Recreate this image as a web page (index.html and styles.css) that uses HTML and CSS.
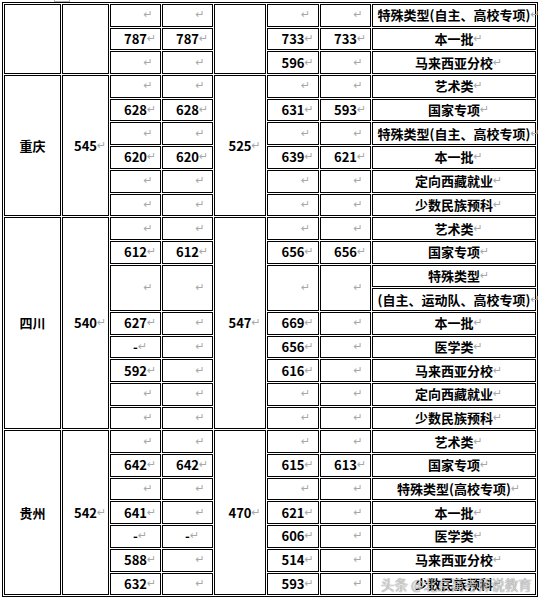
FILE: index.html
```html
<!DOCTYPE html>
<html lang="zh">
<head>
<meta charset="utf-8">
<title>分数线</title>
<link rel="stylesheet" href="styles.css">
</head>
<body>
<div class="page">
  <div class="handle"></div>
  <table class="grid">
    <colgroup>
      <col class="w1"><col class="w2"><col class="w3"><col class="w4"><col class="w5"><col class="w6"><col class="w7"><col class="w8">
    </colgroup>
    <tbody>
      <!-- group 0 -->
      <tr>
        <td rowspan="3"></td><td rowspan="3"></td>
        <td class="e"><span class="m">↵</span></td><td class="e"><span class="m">↵</span></td>
        <td rowspan="3"></td>
        <td class="e"><span class="m">↵</span></td><td class="e"><span class="m">↵</span></td>
        <td>特殊类型(自主、高校专项)<span class="m">↵</span></td>
      </tr>
      <tr>
        <td>787<span class="m">↵</span></td><td>787<span class="m">↵</span></td>
        <td>733<span class="m">↵</span></td><td>733<span class="m">↵</span></td>
        <td>本一批<span class="m">↵</span></td>
      </tr>
      <tr>
        <td class="e"><span class="m">↵</span></td><td class="e"><span class="m">↵</span></td>
        <td>596<span class="m">↵</span></td><td class="e"><span class="m">↵</span></td>
        <td>马来西亚分校<span class="m">↵</span></td>
      </tr>
      <!-- 重庆 -->
      <tr>
        <td rowspan="6">重庆</td><td rowspan="6">545<span class="m">↵</span></td>
        <td class="e"><span class="m">↵</span></td><td class="e"><span class="m">↵</span></td>
        <td rowspan="6">525<span class="m">↵</span></td>
        <td class="e"><span class="m">↵</span></td><td class="e"><span class="m">↵</span></td>
        <td>艺术类<span class="m">↵</span></td>
      </tr>
      <tr>
        <td>628<span class="m">↵</span></td><td>628<span class="m">↵</span></td>
        <td>631<span class="m">↵</span></td><td>593<span class="m">↵</span></td>
        <td>国家专项<span class="m">↵</span></td>
      </tr>
      <tr>
        <td class="e"><span class="m">↵</span></td><td class="e"><span class="m">↵</span></td>
        <td class="e"><span class="m">↵</span></td><td class="e"><span class="m">↵</span></td>
        <td>特殊类型(自主、高校专项)<span class="m">↵</span></td>
      </tr>
      <tr>
        <td>620<span class="m">↵</span></td><td>620<span class="m">↵</span></td>
        <td>639<span class="m">↵</span></td><td>621<span class="m">↵</span></td>
        <td>本一批<span class="m">↵</span></td>
      </tr>
      <tr>
        <td class="e"><span class="m">↵</span></td><td class="e"><span class="m">↵</span></td>
        <td class="e"><span class="m">↵</span></td><td class="e"><span class="m">↵</span></td>
        <td>定向西藏就业<span class="m">↵</span></td>
      </tr>
      <tr>
        <td class="e"><span class="m">↵</span></td><td class="e"><span class="m">↵</span></td>
        <td class="e"><span class="m">↵</span></td><td class="e"><span class="m">↵</span></td>
        <td>少数民族预科<span class="m">↵</span></td>
      </tr>
      <!-- 四川 -->
      <tr>
        <td rowspan="9">四川</td><td rowspan="9">540<span class="m">↵</span></td>
        <td class="e"><span class="m">↵</span></td><td class="e"><span class="m">↵</span></td>
        <td rowspan="9">547<span class="m">↵</span></td>
        <td class="e"><span class="m">↵</span></td><td class="e"><span class="m">↵</span></td>
        <td>艺术类<span class="m">↵</span></td>
      </tr>
      <tr>
        <td>612<span class="m">↵</span></td><td>612<span class="m">↵</span></td>
        <td>656<span class="m">↵</span></td><td>656<span class="m">↵</span></td>
        <td>国家专项<span class="m">↵</span></td>
      </tr>
      <tr>
        <td rowspan="2" class="e"><span class="m">↵</span></td><td rowspan="2" class="e"><span class="m">↵</span></td>
        <td rowspan="2" class="e"><span class="m">↵</span></td><td rowspan="2" class="e"><span class="m">↵</span></td>
        <td>特殊类型<span class="m">↵</span></td>
      </tr>
      <tr>
        <td>(自主、运动队、高校专项)<span class="m">↵</span></td>
      </tr>
      <tr>
        <td>627<span class="m">↵</span></td><td class="e"><span class="m">↵</span></td>
        <td>669<span class="m">↵</span></td><td class="e"><span class="m">↵</span></td>
        <td>本一批<span class="m">↵</span></td>
      </tr>
      <tr>
        <td>-<span class="m">↵</span></td><td class="e"><span class="m">↵</span></td>
        <td>656<span class="m">↵</span></td><td class="e"><span class="m">↵</span></td>
        <td>医学类<span class="m">↵</span></td>
      </tr>
      <tr>
        <td>592<span class="m">↵</span></td><td class="e"><span class="m">↵</span></td>
        <td>616<span class="m">↵</span></td><td class="e"><span class="m">↵</span></td>
        <td>马来西亚分校<span class="m">↵</span></td>
      </tr>
      <tr>
        <td class="e"><span class="m">↵</span></td><td class="e"><span class="m">↵</span></td>
        <td class="e"><span class="m">↵</span></td><td class="e"><span class="m">↵</span></td>
        <td>定向西藏就业<span class="m">↵</span></td>
      </tr>
      <tr>
        <td class="e"><span class="m">↵</span></td><td class="e"><span class="m">↵</span></td>
        <td class="e"><span class="m">↵</span></td><td class="e"><span class="m">↵</span></td>
        <td>少数民族预科<span class="m">↵</span></td>
      </tr>
      <!-- 贵州 -->
      <tr>
        <td rowspan="7">贵州</td><td rowspan="7">542<span class="m">↵</span></td>
        <td class="e"><span class="m">↵</span></td><td class="e"><span class="m">↵</span></td>
        <td rowspan="7">470<span class="m">↵</span></td>
        <td class="e"><span class="m">↵</span></td><td class="e"><span class="m">↵</span></td>
        <td>艺术类<span class="m">↵</span></td>
      </tr>
      <tr>
        <td>642<span class="m">↵</span></td><td>642<span class="m">↵</span></td>
        <td>615<span class="m">↵</span></td><td>613<span class="m">↵</span></td>
        <td>国家专项<span class="m">↵</span></td>
      </tr>
      <tr>
        <td class="e"><span class="m">↵</span></td><td class="e"><span class="m">↵</span></td>
        <td class="e"><span class="m">↵</span></td><td class="e"><span class="m">↵</span></td>
        <td>特殊类型(高校专项)<span class="m">↵</span></td>
      </tr>
      <tr>
        <td>641<span class="m">↵</span></td><td class="e"><span class="m">↵</span></td>
        <td>621<span class="m">↵</span></td><td class="e"><span class="m">↵</span></td>
        <td>本一批<span class="m">↵</span></td>
      </tr>
      <tr>
        <td>-<span class="m">↵</span></td><td>-<span class="m">↵</span></td>
        <td>606<span class="m">↵</span></td><td class="e"><span class="m">↵</span></td>
        <td>医学类<span class="m">↵</span></td>
      </tr>
      <tr>
        <td>588<span class="m">↵</span></td><td class="e"><span class="m">↵</span></td>
        <td>514<span class="m">↵</span></td><td class="e"><span class="m">↵</span></td>
        <td>马来西亚分校<span class="m">↵</span></td>
      </tr>
      <tr>
        <td>632<span class="m">↵</span></td><td class="e"><span class="m">↵</span></td>
        <td>593<span class="m">↵</span></td><td class="e"><span class="m">↵</span></td>
        <td>少数民族预科<span class="m">↵</span></td>
      </tr>
    </tbody>
  </table>
  <div class="watermark">头条 @北京高考师说教育</div>
</div>
</body>
</html>
```

FILE: styles.css
```css
html, body {
  margin: 0;
  padding: 0;
  background: #ffffff;
}

.page {
  position: relative;
  padding: 2px 2px 0 2px;
  width: 536px;
}

.handle {
  position: absolute;
  left: 54px;
  top: -12px;
  width: 14px;
  height: 12px;
  border: 1px solid #b0b0b0;
  background: #ffffff;
}

.grid {
  table-layout: fixed;
  width: 536px;
  border-collapse: separate;
  border-spacing: 1px;
  border: 1px solid #000000;
  font-family: "Noto Sans CJK SC", "Noto Sans", sans-serif;
  font-weight: 700;
  font-size: 13px;
  color: #000000;
}

.w1 { width: 57px; }
.w2 { width: 47px; }
.w3 { width: 51px; }
.w4 { width: 51px; }
.w5 { width: 52px; }
.w6 { width: 52px; }
.w7 { width: 51px; }
.w8 { width: 164px; }

.grid tr {
  height: 22.7px;
}

.grid td {
  box-sizing: border-box;
  border: 1px solid #000000;
  padding: 0;
  text-align: center;
  vertical-align: middle;
  line-height: 16px;
  white-space: nowrap;
  overflow: visible;
}

.m {
  display: inline-block;
  width: 9px;
  margin-right: -9px;
  font-family: "DejaVu Sans", sans-serif;
  font-weight: 400;
  font-size: 11px;
  line-height: 16px;
  color: #a8a8a8;
  text-align: left;
  vertical-align: top;
}

.e .m {
  margin-left: 16px;
}

.watermark {
  position: absolute;
  left: 381px;
  top: 575px;
  font-family: "Noto Sans CJK SC", sans-serif;
  font-size: 13.5px;
  font-weight: 400;
  line-height: 18px;
  color: rgba(255, 255, 255, 0.7);
  text-shadow: 0 0 1px rgba(0, 0, 0, 0.5), 0 0 1px rgba(0, 0, 0, 0.3);
  white-space: nowrap;
}
```
